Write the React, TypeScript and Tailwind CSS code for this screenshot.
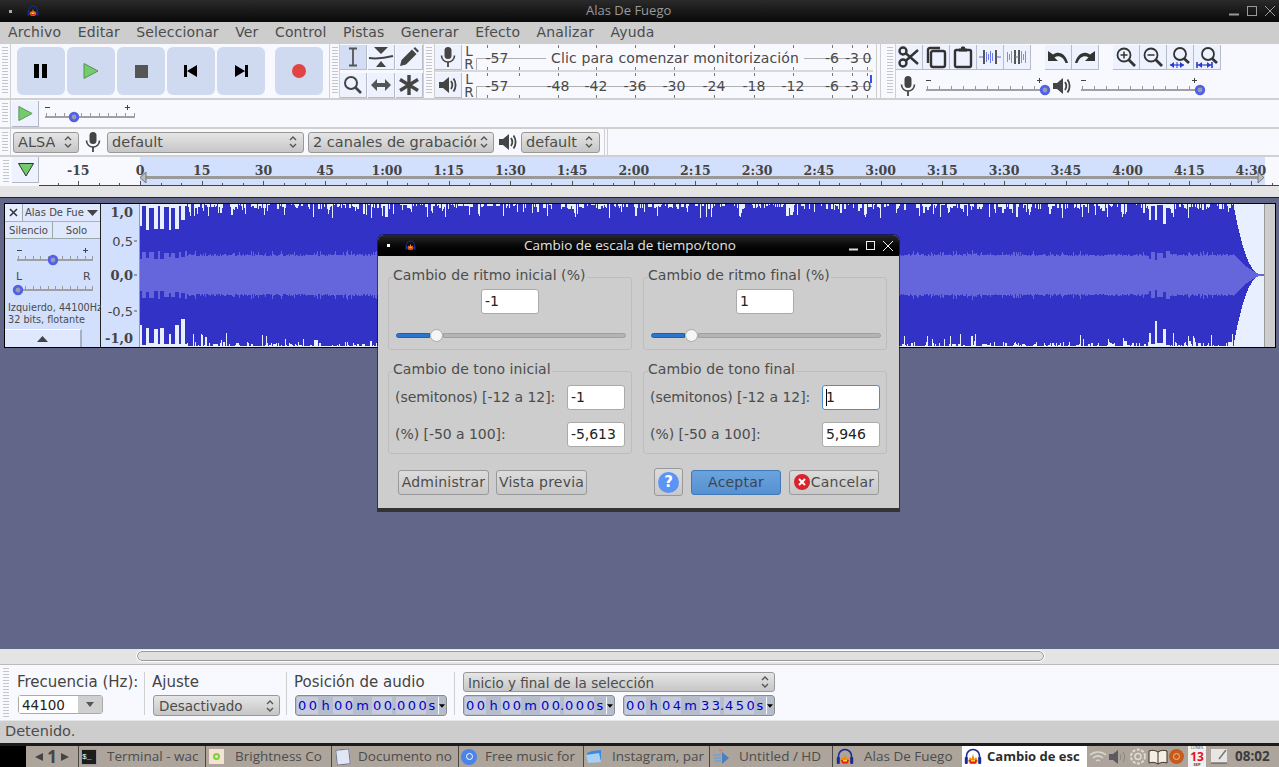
import React, { useMemo } from "react";

const Grip = ({ cls = "" }: { cls?: string }) => (
  <div className={`shrink-0 flex justify-center self-stretch border-r border-[#d0d0d0] ${cls}`}>
    <div className="w-[6px] my-[3px] bg-[repeating-linear-gradient(#c6c6c6_0_1px,transparent_1px_3px)]" />
  </div>
);

const Logo = ({ s = 18 }: { s?: number }) => (
  <svg width={s} height={s} viewBox="0 0 18 18" className="shrink-0">
    <path d="M2.500 11V8a6.500 6.500 0 0 1 13 0v3" fill="none" stroke="#1a2a9a" strokeWidth="1.600" />
    <rect x="0.800" y="9" width="3" height="7" rx="1" fill="#1a2a9a" />
    <rect x="14.200" y="9" width="3" height="7" rx="1" fill="#1a2a9a" />
    <path d="M4 13 6 9l1.500 2L9 6l1.500 5L12 9l2 4-2 3H6z" fill="#f08a10" />
    <path d="M5 12h8l-1.500 3.500h-5z" fill="#e02020" />
    <path d="M7 12h4v1.500H7z" fill="#ffd820" />
  </svg>
);

const Mic = ({ c = "#444" }: { c?: string }) => (
  <svg width="16" height="22" viewBox="0 0 16 22">
    <rect x="4.500" y="1" width="7" height="12" rx="3.500" fill={c} />
    <path d="M1.500 9.500c0 4 3 6.500 6.500 6.500s6.500-2.500 6.500-6.500" fill="none" stroke={c} strokeWidth="1.600" />
    <path d="M8 16v5" stroke={c} strokeWidth="1.800" />
  </svg>
);

const Speaker = ({ c = "#444" }: { c?: string }) => (
  <svg width="20" height="20" viewBox="0 0 20 20">
    <path d="M1 7h4l6-5v16l-6-5H1z" fill={c} />
    <path d="M13 6c1.600 2.400 1.600 5.600 0 8M15.500 3.500c2.800 3.800 2.800 9.200 0 13" fill="none" stroke={c} strokeWidth="1.800" />
  </svg>
);

const Updown = () => (
  <svg width="8" height="14" viewBox="0 0 8 14" className="shrink-0">
    <path d="M1 5l3-3 3 3M1 9l3 3 3-3" fill="none" stroke="#555" strokeWidth="1.400" />
  </svg>
);

const Select = ({ w, h = 21, text, size = "text-[14.500px]", pr = 5, pl = 4, clip = "" }: { w: number; h?: number; text: string; size?: string; pr?: number; pl?: number; clip?: string }) => (
  <div
    style={{ width: w, height: h, paddingRight: pr, paddingLeft: pl }}
    className={`shrink-0 flex items-center justify-between rounded-[3px] border border-[#989898] bg-gradient-to-b from-[#e6e6e6] to-[#c6c6c6] text-[#4c4c4c] overflow-hidden ${size}`}
  >
    <span className={`whitespace-nowrap overflow-hidden pt-[2px] ${clip}`}>{text}</span>
    <Updown />
  </div>
);

const MiniSlider = ({ w, thumb, label = true }: { w: number; thumb: number; label?: boolean }) => {
  const ticks = [];
  const end = w - 4;
  for (let i = 0; i <= 10; i++) ticks.push(2 + (i * (end - 2)) / 10);
  return (
    <svg width={w} height={22} viewBox={`0 0 ${w} 22`} className="shrink-0 overflow-visible">
      {label && <path d={`M1 3.500h5M${end - 9} 3.500h5M${end - 6.500} 1v5`} stroke="#444" strokeWidth="1" />}
      {ticks.map((x, i) => (
        <path key={i} d={`M${Math.round(x) + 0.5} 9v3`} stroke="#999" strokeWidth="1" />
      ))}
      <path d={`M1 13h${end}`} stroke="#a0a0a0" strokeWidth="2" />
      <circle cx={thumb} cy={13} r={3.800} fill="#9a9ab0" stroke="#5060e8" strokeWidth="2.800" />
    </svg>
  );
};

const TB = ({ children, active = false, w = 27 }: { children?: React.ReactNode; active?: boolean; w?: number }) => (
  <div
    style={{ width: w }}
    className={`h-full shrink-0 flex items-center justify-center border-r border-b border-[#b8bcc8] ${active ? "bg-[#d3def4]" : "bg-[#eef2fe]"}`}
  >
    {children}
  </div>
);

const TransBtn = ({ children, cls = "" }: { children: React.ReactNode; cls?: string }) => (
  <div className={`w-[48px] h-[48px] rounded-[6px] bg-[#cfd9f0] flex items-center justify-center shrink-0 ${cls}`}>{children}</div>
);

const GreenPlay = ({ s = 18 }: { s?: number }) => (
  <svg width={s} height={s} viewBox="0 0 18 18">
    <path d="M2 1.500 16 9 2 16.500z" fill="#72cc6c" stroke="#5c8f58" strokeWidth="1" />
  </svg>
);

const LR = () => (
  <div className="w-[14px] shrink-0 flex flex-col items-center justify-center text-[13.500px] leading-[12.500px] text-[#4a4a4a]">
    <span>L</span>
    <span>R</span>
  </div>
);

const Meter = ({ labels, msg, blue }: { labels: [string, number][]; msg?: boolean; blue?: boolean }) => {
  const xs = [11, 43, 82, 120, 159, 198, 238, 278, 317, 356, 376, 391];
  return (
    <svg width="396" height="25" viewBox="0 0 396 25" className="shrink-0 font-['DejaVu_Sans',sans-serif]">
      <path d="M0.500 25V13.500H396" fill="none" stroke="#b0b0b0" strokeWidth="1" />
      {xs.map((x) => (
        <path key={x} d={`M${x + 0.5} 0v3M${x + 0.5} 22v3`} stroke="#777" strokeWidth="1" />
      ))}
      {labels.map(([t, x]) => (
        <text key={t + x} x={x} y="17.500" textAnchor="middle" fontSize="14" fill="#4a4a4a">{t}</text>
      ))}
      {msg && (
        <>
          <rect x="70" y="4" width="258" height="18" fill="#f8f9ff" />
          <text x="199" y="17.500" textAnchor="middle" fontSize="14" letterSpacing="0.150" fill="#4a4a4a">Clic para comenzar monitorización</text>
        </>
      )}
      {blue && <path d="M395 2v8" stroke="#3a50e0" strokeWidth="2" />}
    </svg>
  );
};

const Ruler = () => {
  const labels = ["-15", "0", "15", "30", "45", "1:00", "1:15", "1:30", "1:45", "2:00", "2:15", "2:30", "2:45", "3:00", "3:15", "3:30", "3:45", "4:00", "4:15", "4:30"];
  const step = 61.72;
  const ox = 140 - 39;
  const ticks: React.ReactNode[] = [];
  for (let i = -5; i < 60; i++) {
    const x = Math.round(ox + (i * step) / 3) + 0.5;
    if (x < 10) continue;
    const major = i % 3 === 0;
    ticks.push(<path key={i} d={`M${x} ${major ? 24 : 26}V28`} stroke="#555" strokeWidth="1" />);
  }
  return (
    <svg width="1240" height="29" viewBox="0 0 1240 29" className="shrink-0 font-['DejaVu_Serif',serif]">
      <rect x={ox} y="0" width="1125" height="28" fill="#d2e0fd" />
      {labels.map((t, i) => (
        <text key={t} x={ox + (i - 1) * step} y="17.500" textAnchor="middle" fontSize="12.500" fontWeight="700" fill="#444">{t}</text>
      ))}
      <path d={`M${ox + 5} 20.500H${ox + 1118}`} stroke="#999" strokeWidth="3" />
      <path d={`M${ox + 6} 15v11l-6-5.500z`} fill="#bbb" stroke="#777" strokeWidth="1" />
      <path d={`M${ox + 1118} 15v11l6-5.500z`} fill="#bbb" stroke="#777" strokeWidth="1" />
      {ticks}
      <path d="M0 28.500H1240" stroke="#444" strokeWidth="1" />
    </svg>
  );
};

const Wave = () => {
  const { dark, light } = useMemo(() => {
    let s = 987654321;
    const r = () => {
      s ^= s << 13;
      s ^= s >>> 17;
      s ^= s << 5;
      s >>>= 0;
      return s / 4294967296;
    };
    const W = 1124;
    const cy = 71;
    let dark = "";
    let light = "";
    let blockEnd = -1;
    let on = false;
    let bTop = 0;
    let bBot = 0;
    let bRms = 0;
    let prevTop = 0;
    let prevBot = 0;
    for (let x = 0; x < W; x++) {
      const zone = x < 47 || (x > 1008 && x < 1030);
      if (zone && x > blockEnd) {
        on = !on;
        blockEnd = x + (on ? 1 + Math.floor(r() * 3) : 1 + Math.floor(r() * 5));
        bTop = on ? 14 + r() * 17 : 1 + r() * 3;
        bBot = on ? 12 + r() * 16 : r() * 3;
        bRms = on ? 15 + r() * 3 : 22 + r() * 2;
      }
      let amp = 71;
      let rms = 19 + r() * 2 + (r() < 0.12 ? 2 + r() * 2 : 0);
      let top = 0;
      let bot = 0;
      if (zone) {
        top = bTop;
        bot = bBot;
        rms = bRms;
      } else if (x <= 1092) {
        if (r() < 0.25) {
          top = prevTop;
        } else {
          const a = r();
          top = a < 0.5 ? 0 : a < 0.88 ? 1 + r() * 4 : 5 + r() * 9;
        }
        if (r() < 0.25) {
          bot = prevBot;
        } else {
          const b = r();
          bot = b < 0.55 ? 0 : b < 0.92 ? r() * 4 : 4 + r() * 9;
        }
        prevTop = top;
        prevBot = bot;
      } else {
        const t = (x - 1093) / 30;
        amp = Math.max(0.8, 71 * Math.pow(Math.max(0, 1 - t), 2.4));
        rms = Math.max(0.8, 21 * Math.pow(Math.max(0, 1 - t), 1.6));
      }
      dark += `M${x + 0.5} ${Math.round(cy - amp + top)}V${Math.round(cy + amp - bot)}`;
      light += `M${x + 0.5} ${Math.round(cy - rms)}V${Math.round(cy + rms)}`;
    }
    return { dark, light };
  }, []);
  return (
    <svg width="1124" height="143" viewBox="0 0 1124 143" shapeRendering="crispEdges" className="shrink-0">
      <rect width="1124" height="143" fill="#e8f0ff" />
      <path d={dark} stroke="#3232c6" strokeWidth="1" fill="none" />
      <path d={light} stroke="#6565dc" strokeWidth="1" fill="none" />
    </svg>
  );
};

const VRuler = () => (
  <svg width="39" height="143" viewBox="0 0 39 143" className="shrink-0 font-['DejaVu_Serif',serif] bg-[#d2e0fd]">
    <text x="32" y="13" textAnchor="end" fontSize="13" fontWeight="700" fill="#444">1,0</text>
    <text x="32" y="42" textAnchor="end" fontSize="13" fill="#444" className="font-['DejaVu_Sans',sans-serif]">0,5</text>
    <text x="32" y="76" textAnchor="end" fontSize="13" fontWeight="700" fill="#444">0,0</text>
    <text x="32" y="112" textAnchor="end" fontSize="13" fill="#444" className="font-['DejaVu_Sans',sans-serif]">-0,5</text>
    <text x="32" y="139" textAnchor="end" fontSize="13" fontWeight="700" fill="#444">-1,0</text>
    <path d="M33 37h3M33 71h3M33 107h3" stroke="#555" strokeWidth="1" />
    <path d="M38.500 0V143" stroke="#999" strokeWidth="1" />
  </svg>
);

const TimeBox = ({ v }: { v: [string, string, string, string] }) => {
  const digit = "bg-[#c7ccdc] text-[#0000c8] tracking-[2.500px] pl-[1px] text-left";
  const unit = "bg-[#b5bccc] text-[#0000c8] text-center";
  return (
    <div className="w-[152px] h-[21px] shrink-0 flex items-stretch rounded-[3px] border border-[#8a8a8a] bg-[#b5bccc] p-[1px] text-[13px] leading-[17px] overflow-hidden outline-1 outline-white">
      <span className={`w-[21px] ${digit}`}>{v[0]}</span>
      <span className={`w-[15px] ${unit}`}>h</span>
      <span className={`w-[20px] ${digit}`}>{v[1]}</span>
      <span className={`w-[19px] ${unit}`}>m</span>
      <span className={`w-[20px] ${digit}`}>{v[2]}</span>
      <span className={`w-[4px] ${unit}`}>.</span>
      <span className={`w-[30px] ${digit}`}>{v[3]}</span>
      <span className={`w-[12px] ${unit}`}>s</span>
      <span className="w-[7px] flex items-center justify-center border-l border-[#f8f9ff]">
        <svg width="6" height="4" viewBox="0 0 7 4"><path d="M0 0h7L3.500 4z" fill="#000" /></svg>
      </span>
    </div>
  );
};

const DlgGroup = ({ title, h, children }: { title: string; h: number; children: React.ReactNode }) => (
  <div style={{ height: h }} className="relative w-[244px] rounded-[3px] border border-[#bdbdbd]">
    <span className="absolute left-[4px] top-[-12px] bg-[#cdcdcd] pr-[1px] text-[14px] tracking-[0.060px] leading-[18px] text-[#4c4c4c] whitespace-nowrap">{title}</span>
    {children}
  </div>
);

const DInput = ({ v, focus = false }: { v: string; focus?: boolean }) => (
  <div className={`w-[58px] h-[25px] shrink-0 rounded-[3px] bg-white px-[3px] flex items-center text-[14px] text-[#222] border ${focus ? "border-[#4a8ccc] pl-[3px]" : "border-[#aaa]"}`}>
    {focus && <span className="w-px h-[17px] bg-black mr-[-1px]" />}
    {v}
  </div>
);

const DSlider = () => (
  <div className="flex items-center ml-[7px] mr-[5px] h-[14px]">
    <div className="w-[34px] h-[5px] rounded-l-full bg-[#2a76cc] border border-[#2260a8]" />
    <div className="w-[13px] h-[13px] rounded-full bg-[#f5f5f5] border border-[#aaa] shrink-0" />
    <div className="flex-1 h-[5px] rounded-r-full bg-[#b4b4b4] border border-[#a0a0a0]" />
  </div>
);

const DBtn = ({ children, w, cls = "", primary = false }: { children: React.ReactNode; w: number; cls?: string; primary?: boolean }) => (
  <div
    style={{ width: w }}
    className={`h-[25px] shrink-0 rounded-[3px] border flex items-center justify-center text-[14px] tracking-[0.200px] bg-gradient-to-b ${
      primary ? "border-[#3f78b8] from-[#6ba3de] to-[#5690d0] text-[#3a4654]" : "border-[#999] from-[#dcdcdc] to-[#c8c8c8] text-[#4c4c4c]"
    } ${cls}`}
  >
    {children}
  </div>
);

const Task = ({ icon, text, w, tx, pl = 3, active = false }: { icon: React.ReactNode; text: string; w: number; tx: number; pl?: number; active?: boolean }) => (
  <div style={{ width: w }} className={`shrink-0 h-full flex items-center overflow-hidden ${active ? "bg-white font-bold text-[13px] text-[#2c2c2c]" : "text-[#4c4c4c] border-l border-[#4a4640]"}`}>
    <span style={{ width: tx, paddingLeft: pl }} className="flex justify-start shrink-0">{icon}</span>
    <span className="whitespace-nowrap">{text}</span>
  </div>
);

const App = () => {
  return (
    <div className="relative w-[1279px] h-[767px] overflow-hidden flex flex-col bg-[#62678a] font-['DejaVu_Sans',sans-serif] text-[#4a4a4a]">
      {/* Window title */}
      <div className="h-[22px] shrink-0 relative flex items-center bg-gradient-to-b from-[#2a2a2a] to-[#0a0a0a]">
        <span className="ml-[9px] w-[3px] h-[3px] bg-[#aaa]" />
        <span className="ml-[15px]"><Logo s={12} /></span>
        <span className="absolute left-[586px] font-['Open_Sans',sans-serif] text-[13px] text-[#9a9a9a]">Alas De Fuego</span>
        <span className="ml-auto mr-[4px] flex items-center gap-[8px]">
          <svg width="10" height="10" viewBox="0 0 10 10"><path d="M0 8.500h10" stroke="#999" strokeWidth="2" /></svg>
          <svg width="10" height="10" viewBox="0 0 10 10"><rect x="0.500" y="0.500" width="9" height="9" fill="none" stroke="#999" /></svg>
          <svg width="10" height="10" viewBox="0 0 10 10"><path d="M0 0l10 10M10 0 0 10" stroke="#999" /></svg>
        </span>
      </div>

      {/* Menu */}
      <div className="h-[22px] shrink-0 flex items-center pb-[2px] bg-[#cdcdcd] text-[14px] tracking-[0.120px] text-[#4c4c4c] pl-[8px] gap-[16.500px]">
        {["Archivo", "Editar", "Seleccionar", "Ver", "Control", "Pistas", "Generar", "Efecto", "Analizar", "Ayuda"].map((m) => (
          <span key={m}>{m}</span>
        ))}
      </div>

      {/* Toolbars */}
      <div className="h-[56px] shrink-0 flex bg-[#f8f9ff] border-b-2 border-[#d0d0d0]">
        <Grip cls="w-[11px]" />
        <div className="w-[318px] shrink-0 flex items-start pl-[6px] pt-[3px] gap-[2px]">
          <TransBtn>
            <svg width="14" height="14" viewBox="0 0 14 14"><path d="M0 0h5v14H0zM8 0h5v14H8z" fill="#000" /></svg>
          </TransBtn>
          <TransBtn><GreenPlay s={18} /></TransBtn>
          <TransBtn><span className="w-[13px] h-[13px] bg-[#555]" /></TransBtn>
          <TransBtn>
            <svg width="14" height="14" viewBox="0 0 14 14"><path d="M0 1h3v12H0zM13 1v12L3 7z" fill="#000" /></svg>
          </TransBtn>
          <TransBtn>
            <svg width="14" height="14" viewBox="0 0 14 14"><path d="M1 1v12l10-6zM11 1h3v12h-3z" fill="#000" /></svg>
          </TransBtn>
          <TransBtn cls="ml-[8px]"><span className="w-[14px] h-[14px] rounded-full bg-[#e04444]" /></TransBtn>
        </div>
        <Grip cls="w-[11px] border-l" />
        <div className="w-[84px] shrink-0 flex flex-col border-r border-[#d0d0d0]">
          <div className="h-[28px] shrink-0 flex gap-[1px] pt-[1px] pb-[2px]">
            <TB active>
              <svg width="14" height="20" viewBox="0 0 14 20"><path d="M3 1.500h8M3 18.500h8M7 1.500v17" fill="none" stroke="#555" strokeWidth="1.800" /></svg>
            </TB>
            <TB>
              <svg width="26" height="22" viewBox="0 0 26 22"><path d="M6 1h14l-7 7zM8 21h10l-5-6z" fill="#444" /><path d="M1 12c8 1 16 0 24-2" fill="none" stroke="#444" strokeWidth="2" /></svg>
            </TB>
            <TB>
              <svg width="20" height="20" viewBox="0 0 20 20"><path d="M1 19l1.500-6L13 2.500l4.500 4.500L7 17.500zM14.500 1.500 16 0l4 4-1.500 1.500z" fill="#444" /></svg>
            </TB>
          </div>
          <div className="h-[26px] shrink-0 flex gap-[1px] pt-[1px]">
            <TB>
              <svg width="20" height="20" viewBox="0 0 20 20"><circle cx="8" cy="8" r="6" fill="none" stroke="#444" strokeWidth="2" /><path d="M12.500 12.500 18 18" stroke="#444" strokeWidth="2.600" /></svg>
            </TB>
            <TB>
              <svg width="22" height="14" viewBox="0 0 22 14"><path d="M1 7l6-6v4h8V1l6 6-6 6V9H7v4z" fill="#555" /></svg>
            </TB>
            <TB>
              <svg width="22" height="22" viewBox="0 0 22 22"><path d="M11 1v20M2 5.500l18 11M20 5.500l-18 11" stroke="#444" strokeWidth="3.400" /></svg>
            </TB>
          </div>
        </div>
        <Grip cls="w-[11px]" />
        <div className="w-[438px] shrink-0 flex flex-col">
          <div className="h-[28px] shrink-0 flex pt-[1px] border-b-2 border-[#d8d8d8]">
            <TB><Mic /></TB>
            <LR />
            <Meter msg labels={[["-57", 21], ["-6", 356], ["-3", 376], ["0", 391]]} />
          </div>
          <div className="h-[26px] shrink-0 flex pt-[1px]">
            <TB><Speaker /></TB>
            <LR />
            <Meter blue labels={[["-57", 21], ["-48", 82], ["-42", 120], ["-36", 159], ["-30", 198], ["-24", 238], ["-18", 278], ["-12", 317], ["-6", 356], ["-3", 376], ["0", 391]]} />
          </div>
        </div>
        <div className="w-[5px] ml-[3px] border-x border-[#cfcfcf] shrink-0" />
        <div className="w-[3px]" />
        <Grip cls="w-[12px]" />
        <div className="flex flex-col flex-1">
          <div className="h-[28px] shrink-0 flex items-stretch pt-[1px] pb-[2px]">
            <TB>
              <svg width="24" height="24" viewBox="0 0 24 24" fill="none" stroke="#333" strokeWidth="2.400"><circle cx="6" cy="6" r="3.500" /><circle cx="6" cy="18" r="3.500" /><path d="M8.500 8 21 19M8.500 16 21 5" /></svg>
            </TB>
            <TB>
              <svg width="22" height="23" viewBox="0 0 22 23" fill="none" stroke="#333" strokeWidth="2.400"><rect x="6" y="5" width="14" height="16" rx="2" /><path d="M3 17V4c0-1.500 1-2 2-2h10" /></svg>
            </TB>
            <TB>
              <svg width="20" height="23" viewBox="0 0 20 23" fill="none" stroke="#333" strokeWidth="2.400"><rect x="2" y="4" width="16" height="17" rx="1.500" /><path d="M6 5V3h2.500V1h3v2H14v2z" fill="#333" strokeWidth="1" /></svg>
            </TB>
            <TB>
              <svg width="22" height="16" viewBox="0 0 22 16" fill="none"><path d="M0 8h5M17 8h5" stroke="#5a6ce0" strokeWidth="1.200" /><path d="M5 1v14" stroke="#555" strokeWidth="2" /><path d="M7.500 3v10M9.500 5v6M11.500 2v12M13.500 4v8" stroke="#6a7ae6" strokeWidth="1" /><path d="M17 1v14" stroke="#555" strokeWidth="2" /></svg>
            </TB>
            <TB>
              <svg width="22" height="16" viewBox="0 0 22 16" fill="none"><path d="M1.500 3v10M3.500 5v6M5.500 2v12M15.500 2v12M17.500 5v6M19.500 2v12" stroke="#7e8ce8" strokeWidth="1" /><path d="M9 1v14M13 1v14" stroke="#555" strokeWidth="2" /><path d="M9 8h4" stroke="#777" strokeWidth="1" /></svg>
            </TB>
            <div className="w-[14px] shrink-0" />
            <TB>
              <svg width="22" height="16" viewBox="0 0 22 16"><path d="M1 2v10h10L7.500 8.500C11 6 16 7 18.500 14H21C19 5 12 1 6 5.500z" fill="#333" /></svg>
            </TB>
            <TB>
              <svg width="22" height="16" viewBox="0 0 22 16"><path d="M21 2v10H11l3.500-3.500C11 6 6 7 3.500 14H1C3 5 10 1 16 5.500z" fill="#333" /></svg>
            </TB>
            <div className="w-[14px] shrink-0" />
            <TB>
              <svg width="20" height="20" viewBox="0 0 20 20" fill="none" stroke="#333"><circle cx="8" cy="8" r="6.500" strokeWidth="1.800" /><path d="M12.500 12.500 19 19" strokeWidth="2.800" /><path d="M4.500 8h7M8 4.500v7" strokeWidth="1.500" /></svg>
            </TB>
            <TB>
              <svg width="20" height="20" viewBox="0 0 20 20" fill="none" stroke="#333"><circle cx="8" cy="8" r="6.500" strokeWidth="1.800" /><path d="M12.500 12.500 19 19" strokeWidth="2.800" /><path d="M4.500 8h7" strokeWidth="1.500" /></svg>
            </TB>
            <TB>
              <svg width="22" height="23" viewBox="0 0 22 23" fill="none"><circle cx="11" cy="8" r="6" stroke="#333" strokeWidth="1.800" /><path d="M15 12.500 20 17" stroke="#333" strokeWidth="2.800" /><path d="M1 19h14" stroke="#2a3ad0" strokeWidth="1.200" /><path d="M1 19l4-3v6zM15 19l-4-3v6z" fill="#2a3ad0" /><path d="M8 16v6" stroke="#2a3ad0" strokeWidth="1" /></svg>
            </TB>
            <TB>
              <svg width="22" height="23" viewBox="0 0 22 23" fill="none"><circle cx="12" cy="8" r="6" stroke="#333" strokeWidth="1.800" /><path d="M16 12.500 21 17" stroke="#333" strokeWidth="2.800" /><path d="M1 19h15" stroke="#2a3ad0" strokeWidth="1.200" /><path d="M1 16v6M16 16v6" stroke="#2a3ad0" strokeWidth="1.600" /><path d="M2 19l4-3v6zM15 19l-4-3v6z" fill="#2a3ad0" /></svg>
            </TB>
          </div>
          <div className="h-[26px] shrink-0 flex items-start pl-[4px]">
            <span className="mt-[3px]"><Mic /></span>
            <span className="ml-[9px] mt-[5px]"><MiniSlider w={125} thumb={120} /></span>
            <span className="ml-[2px] mt-[4px]"><Speaker /></span>
            <span className="ml-[8px] mt-[5px]"><MiniSlider w={125} thumb={120} /></span>
          </div>
        </div>
      </div>

      <div className="h-[29px] shrink-0 flex items-start bg-[#f8f9ff] border-b-2 border-[#d0d0d0]">
        <Grip cls="w-[11px]" />
        <div className="ml-[1px] w-[27px] h-[26px] mt-[1px] flex items-center justify-center border-r border-b border-[#b0b6c4] bg-[#eef2fe]"><GreenPlay s={17} /></div>
        <span className="ml-[5px] mt-[4px]"><MiniSlider w={94} thumb={30} /></span>
      </div>

      <div className="h-[28px] shrink-0 flex items-center bg-[#f8f9ff] border-b-2 border-[#d0d0d0]">
        <Grip cls="w-[11px]" />
        <span className="ml-[2px]"><Select w={66} text="ALSA" pr={6} /></span>
        <span className="ml-[6px] w-[16px] flex justify-center"><Mic /></span>
        <span className="ml-[6px]"><Select w={197} text="default" pr={6} /></span>
        <span className="ml-[4px]"><Select w={186} text="2 canales de grabación" pr={5} clip="max-w-[163px]" /></span>
        <span className="ml-[4px]"><Speaker /></span>
        <span className="ml-[3px]"><Select w={79} text="default" pr={6} /></span>
        <span className="ml-[4px] w-[4px] h-full border-x border-[#d0d0d0]" />
      </div>

      <div className="h-[29px] shrink-0 flex bg-[#f8f9ff]">
        <Grip cls="w-[11px] border-r-0" />
        <div className="ml-[1px] w-[27px] h-[26px] pl-[1px] flex items-center justify-center border-r border-b border-[#b0b6c4] bg-[#eef2fe]">
          <svg width="16" height="14" viewBox="0 0 16 14"><path d="M0.500 0.500h15L8 13z" fill="#72cc6c" stroke="#333" /></svg>
        </div>
        <Ruler />
      </div>
      <div className="h-[12px] shrink-0 bg-[#e4e4e4] border-b border-[#222]" />

      {/* Track canvas */}
      <div className="flex-1 min-h-0 pt-[5px] pl-[4px]">
        <div className="w-[1272px] h-[145px] flex bg-black p-[1px]">
          <div className="w-[96px] shrink-0 flex flex-col bg-[#d2e0fd] border-r border-[#222] text-[10px]">
            <div className="h-[18px] shrink-0 flex border-b border-[#aab0c0]">
              <div className="w-[18px] bg-[#e6edff] border-r border-[#99aaaa] flex items-center justify-center">
                <svg width="9" height="9" viewBox="0 0 9 9"><path d="M1 1l7 7M8 1 1 8" stroke="#333" strokeWidth="1.500" /></svg>
              </div>
              <div className="flex-1 pl-[2px] flex items-center justify-between pr-[2px] bg-[#dfe8fc] whitespace-nowrap overflow-hidden">
                <span>Alas De Fue</span>
                <svg width="11" height="6" viewBox="0 0 11 6" className="shrink-0"><path d="M0 0h11L5.500 6z" fill="#444" /></svg>
              </div>
            </div>
            <div className="h-[17px] shrink-0 flex border-b border-[#99aaaa]">
              <div className="w-[48px] flex items-center justify-center border-r border-[#99aaaa] bg-[#dfe8fc]">Silencio</div>
              <div className="flex-1 flex items-center justify-center bg-[#dfe8fc]">Solo</div>
            </div>
            <div className="mt-[8px] ml-[11px] h-[22px]"><MiniSlider w={80} thumb={37} /></div>
            <div className="relative mt-[8px] ml-[11px] h-[22px]">
              <span className="absolute left-[0px] top-[-8px] text-[11px]">L</span>
              <span className="absolute left-[67px] top-[-8px] text-[11px]">R</span>
              <MiniSlider w={80} thumb={2} label={false} />
            </div>
            <div className="mt-[3px] pl-[3px] leading-[12px] text-[9.700px] whitespace-nowrap"><div>Izquierdo, 44100Hz</div><div>32 bits, flotante</div></div>
            <div className="mt-auto w-[77px] h-[18px] flex items-center justify-center bg-[#dfe8fc] border-t border-white border-r-2 border-r-[#a8b0c0]">
              <svg width="11" height="6" viewBox="0 0 11 6"><path d="M0 6h11L5.500 0z" fill="#444" /></svg>
            </div>
          </div>
          <VRuler />
          <Wave />
          <div className="flex-1 bg-[#cdcdcd] border-l border-[#999]" />
        </div>
      </div>

      {/* Horizontal scrollbar */}
      <div className="h-[15px] shrink-0 bg-[#e4e4e4] pl-[137px] pt-[2px]">
        <div className="w-[907px] h-[10px] rounded-full border border-[#999] bg-[#e0e0e0] outline-1 outline-white" />
      </div>

      {/* Selection toolbar */}
      <div className="h-[56px] shrink-0 flex bg-[#f8f9ff] border-t border-[#bbb] text-[15px] text-[#444]">
        <Grip cls="w-[11px] border-r-0" />
        <div className="w-[134px] shrink-0 pl-[6px] mt-[7px] mb-[5px] flex flex-col border-r border-[#d0d0d0]">
          <span className="leading-[20px] whitespace-nowrap">Frecuencia (Hz):</span>
          <div className="mt-[3px] ml-[1px] w-[85px] h-[19px] flex items-stretch rounded-[3px] border border-[#aaa] text-[13.500px]">
            <span className="w-[59px] bg-white pl-[3px] leading-[18px] text-[#222]">44100</span>
            <span className="flex-1 bg-[#cfcfcf] flex items-center justify-center">
              <svg width="8" height="5" viewBox="0 0 8 5"><path d="M0 0h8L4 5z" fill="#555" /></svg>
            </span>
          </div>
        </div>
        <div className="w-[142px] shrink-0 pl-[7px] mt-[7px] mb-[5px] flex flex-col border-r border-[#d0d0d0]">
          <span className="leading-[20px]">Ajuste</span>
          <div className="mt-[3px] ml-[1px]"><Select w={127} text="Desactivado" size="text-[13.500px]" pr={5} pl={5} /></div>
        </div>
        <div className="w-[168px] shrink-0 pl-[7px] mt-[7px] mb-[5px] flex flex-col border-r border-[#d0d0d0]">
          <span className="leading-[20px]">Posición de audio</span>
          <div className="mt-[3px] ml-[1px]"><TimeBox v={["00", "00", "00", "000"]} /></div>
        </div>
        <div className="shrink-0 pl-[8px] pt-[7px] flex flex-col gap-[3px]">
          <Select w={312} h={20} text="Inicio y final de la selección" size="text-[13.500px]" pr={5} />
          <div className="flex gap-[8px]">
            <TimeBox v={["00", "00", "00", "000"]} />
            <TimeBox v={["00", "04", "33", "450"]} />
          </div>
        </div>
      </div>

      {/* Status */}
      <div className="h-[23px] shrink-0 bg-[#cdcdcd] border-t border-[#e6e6e6] pl-[5px] flex items-center text-[14.500px] text-[#4c4c4c]">Detenido.</div>
      <div className="h-[3px] shrink-0 bg-[#1c1c1c]" />

      {/* Taskbar */}
      <div className="h-[21px] shrink-0 flex bg-[#ada59c] font-['Open_Sans',sans-serif] text-[13.500px]">
        <div className="w-[26px] shrink-0 bg-black" />
        <div className="w-[52px] shrink-0 flex items-center justify-center gap-[4px] text-[#444]">
          <svg width="8" height="8" viewBox="0 0 8 8"><path d="M8 0v8L0 4z" fill="#444" /></svg>
          <span className="text-[17px] font-bold leading-none">1</span>
          <svg width="8" height="8" viewBox="0 0 8 8"><path d="M0 0v8l8-4z" fill="#444" /></svg>
        </div>
        <Task w={127} tx={28} pl={2} text="Terminal - wac" icon={<span className="block w-[16px] h-[16px] bg-[#1c1c1c] border border-[#999] text-[8px] leading-[14px] text-[#ddffee] font-mono">$_</span>} />
        <Task w={126} tx={29} text="Brightness Co" icon={<span className="flex w-[15px] h-[15px] bg-[#f2e4d0] items-center justify-center"><span className="w-[7px] h-[7px] rounded-full border-2 border-[#7ed040]" /></span>} />
        <Task w={127} tx={26} pl={4} text="Documento no" icon={<span className="block w-[14px] h-[16px] bg-[#dfe6f4] border border-[#777788] -rotate-6" />} />
        <Task w={125} tx={26} pl={2} text="Free music for" icon={<span className="flex w-[16px] h-[16px] rounded-full bg-[#4a84e8] items-center justify-center"><span className="w-[7px] h-[7px] rounded-full border border-white" /></span>} />
        <Task w={126} tx={28} pl={2} text="Instagram, par" icon={<svg width="16" height="15" viewBox="0 0 16 15"><path d="M1 4l5-2 9-1v10l-13 3z" fill="#3a8ae0" /><path d="M0 6l13-2 2 9-13 1z" fill="#a8d0f4" /></svg>} />
        <Task w={123} tx={29} pl={3} text="Untitled / HD" icon={<svg width="16" height="16" viewBox="0 0 16 16"><path d="M9 3l7 6-7 6z" fill="#4a80c0" /><path d="M0 6h8M1 9h7M2 12h6" stroke="#6aa0e0" strokeWidth="1.500" /><path d="M5 0h5L7.500 4z" fill="#e08070" /></svg>} />
        <Task w={130} tx={31} pl={3} text="Alas De Fuego" icon={<Logo s={18} />} />
        <Task w={125} tx={25} pl={2} active text="Cambio de esc" icon={<Logo s={18} />} />
        <div className="flex-1 flex items-center pl-[2px]">
          <svg width="18" height="16" viewBox="0 0 18 16" fill="none" stroke="#d8d4ce" strokeWidth="1.600"><path d="M1 6c4.500-4 11.500-4 16 0M4 9c3-2.500 7-2.500 10 0M7 12c1-1 3-1 4 0" /></svg>
          <svg width="18" height="16" viewBox="0 0 18 16" className="ml-[2px]"><path d="M0 5h4l5-4v14l-5-4H0z" fill="#5c5a60" /><path d="M11 5c1 2 1 4 0 6M14 3c2 3 2 7 0 10" fill="none" stroke="#8a8680" strokeWidth="1" /></svg>
          <svg width="18" height="17" viewBox="0 0 18 17" className="ml-[2px]"><circle cx="9" cy="8.500" r="7" fill="none" stroke="#e0dcd4" strokeWidth="2" strokeDasharray="3 1.500" /><circle cx="9" cy="8.500" r="3" fill="none" stroke="#e0dcd4" strokeWidth="1.500" /></svg>
          <svg width="20" height="16" viewBox="0 0 20 16" className="ml-[1px]"><path d="M10 3C7 1 4 1 1 2v12c3-1 6-1 9 1 3-2 6-2 9-1V2c-3-1-6-1-9 1z" fill="#f4efe4" stroke="#3a3028" /><path d="M10 3v12" stroke="#3a3028" /></svg>
          <span className="ml-[1px] w-[15px] h-[15px] rounded-full bg-[#c85a1c] flex items-center justify-center"><span className="w-[7px] h-[7px] rounded-full border border-[#f0c090]" /></span>
          <span className="ml-[4px] w-[18px] h-[21px] bg-[#f0f0f0] flex flex-col items-center justify-between text-[12px] leading-[12px] font-bold text-[#e8121c]">
            <span className="text-[4px] leading-[4px] font-normal text-[#444]">LUNES</span>
            <span>13</span>
            <span className="text-[4px] leading-[4px] text-[#444]">SEP</span>
          </span>
          <svg width="18" height="17" viewBox="0 0 18 17" className="ml-[4px]"><path d="M1 1h16v14H1z" fill="#e8e6e2" /><path d="M1 15h16" stroke="#444" /><path d="M9 11 16 2" stroke="#777" strokeWidth="1.500" /></svg>
          <span className="ml-[7px] font-bold text-[13.500px] text-[#3c3c3c]">08:02</span>
        </div>
      </div>

      {/* Dialog window */}
      <div className="absolute left-[378px] top-[235px] w-[521px] h-[276px] flex flex-col rounded-t-[6px] overflow-hidden shadow-[0_0_0_1px_rgba(0,0,0,0.5)] bg-[#cdcdcd]">
        <div className="h-[21px] shrink-0 relative flex items-center bg-gradient-to-b from-[#282828] to-[#000]">
          <span className="ml-[9px] w-[3px] h-[3px] bg-white" />
          <span className="ml-[15px]"><Logo s={11} /></span>
          <span className="absolute left-[146px] font-['Open_Sans',sans-serif] text-[13.500px] text-[#e4e4e4] whitespace-nowrap">Cambio de escala de tiempo/tono</span>
          <span className="ml-auto mr-[6px] flex items-center gap-[8px] relative">
            <svg width="9" height="10" viewBox="0 0 9 10"><path d="M0 8.500h9" stroke="#ddd" strokeWidth="2" /></svg>
            <svg width="9" height="10" viewBox="0 0 9 10"><rect x="0.500" y="0.500" width="8" height="8" fill="none" stroke="#eee" /></svg>
            <svg width="10" height="10" viewBox="0 0 10 10"><path d="M0 0l10 10M10 0 0 10" stroke="#eee" /></svg>
          </span>
        </div>
        <div className="flex-1 min-h-0 pl-[10px] pr-[12px] pt-[21px] text-[14px] tracking-[-0.050px] text-[#4c4c4c]">
          <div className="grid grid-cols-[244px_244px] gap-x-[11px] gap-y-[21px]">
            <DlgGroup title="Cambio de ritmo inicial (%)" h={73}>
              <div className="flex justify-center pt-[11px] pb-[14px]"><DInput v="-1" /></div>
              <DSlider />
            </DlgGroup>
            <DlgGroup title="Cambio de ritmo final (%)" h={73}>
              <div className="flex justify-center pt-[11px] pb-[14px]"><DInput v="1" /></div>
              <DSlider />
            </DlgGroup>
            <DlgGroup title="Cambio de tono inicial" h={83}>
              <div className="flex flex-col gap-[12px] pt-[13px] pl-[6px] pr-[6px]">
                <div className="flex items-center justify-between"><span>(semitonos) [-12 a 12]:</span><DInput v="-1" /></div>
                <div className="flex items-center justify-between"><span>(%) [-50 a 100]:</span><DInput v="-5,613" /></div>
              </div>
            </DlgGroup>
            <DlgGroup title="Cambio de tono final" h={83}>
              <div className="flex flex-col gap-[12px] pt-[13px] pl-[6px] pr-[6px]">
                <div className="flex items-center justify-between"><span>(semitonos) [-12 a 12]:</span><DInput v="1" focus /></div>
                <div className="flex items-center justify-between"><span>(%) [-50 a 100]:</span><DInput v="5,946" /></div>
              </div>
            </DlgGroup>
          </div>
          <div className="mt-[14px] flex items-center pl-[10px] h-[28px]">
            <DBtn w={91}>Administrar</DBtn>
            <DBtn w={91} cls="ml-[7px]">Vista previa</DBtn>
            <div className="ml-[67px] w-[29px] h-[28px] rounded-[3px] border border-[#999] bg-gradient-to-b from-[#dcdcdc] to-[#c8c8c8] flex items-center justify-center">
              <span className="w-[21px] h-[21px] rounded-full bg-[#5c94f4] text-white font-bold text-[15px] leading-[21px] text-center">?</span>
            </div>
            <DBtn w={90} primary cls="ml-[8px]">Aceptar</DBtn>
            <DBtn w={90} cls="ml-[8px]">
              <span className="w-[16px] h-[16px] rounded-full bg-[#d8242c] flex items-center justify-center mr-[1px]">
                <svg width="8" height="8" viewBox="0 0 8 8"><path d="M1 1l6 6M7 1 1 7" stroke="#fff" strokeWidth="2" /></svg>
              </span>
              Cancelar
            </DBtn>
          </div>
        </div>
        <div className="h-[3px] shrink-0 bg-[#333]" />
      </div>
    </div>
  );
};

export default App;
